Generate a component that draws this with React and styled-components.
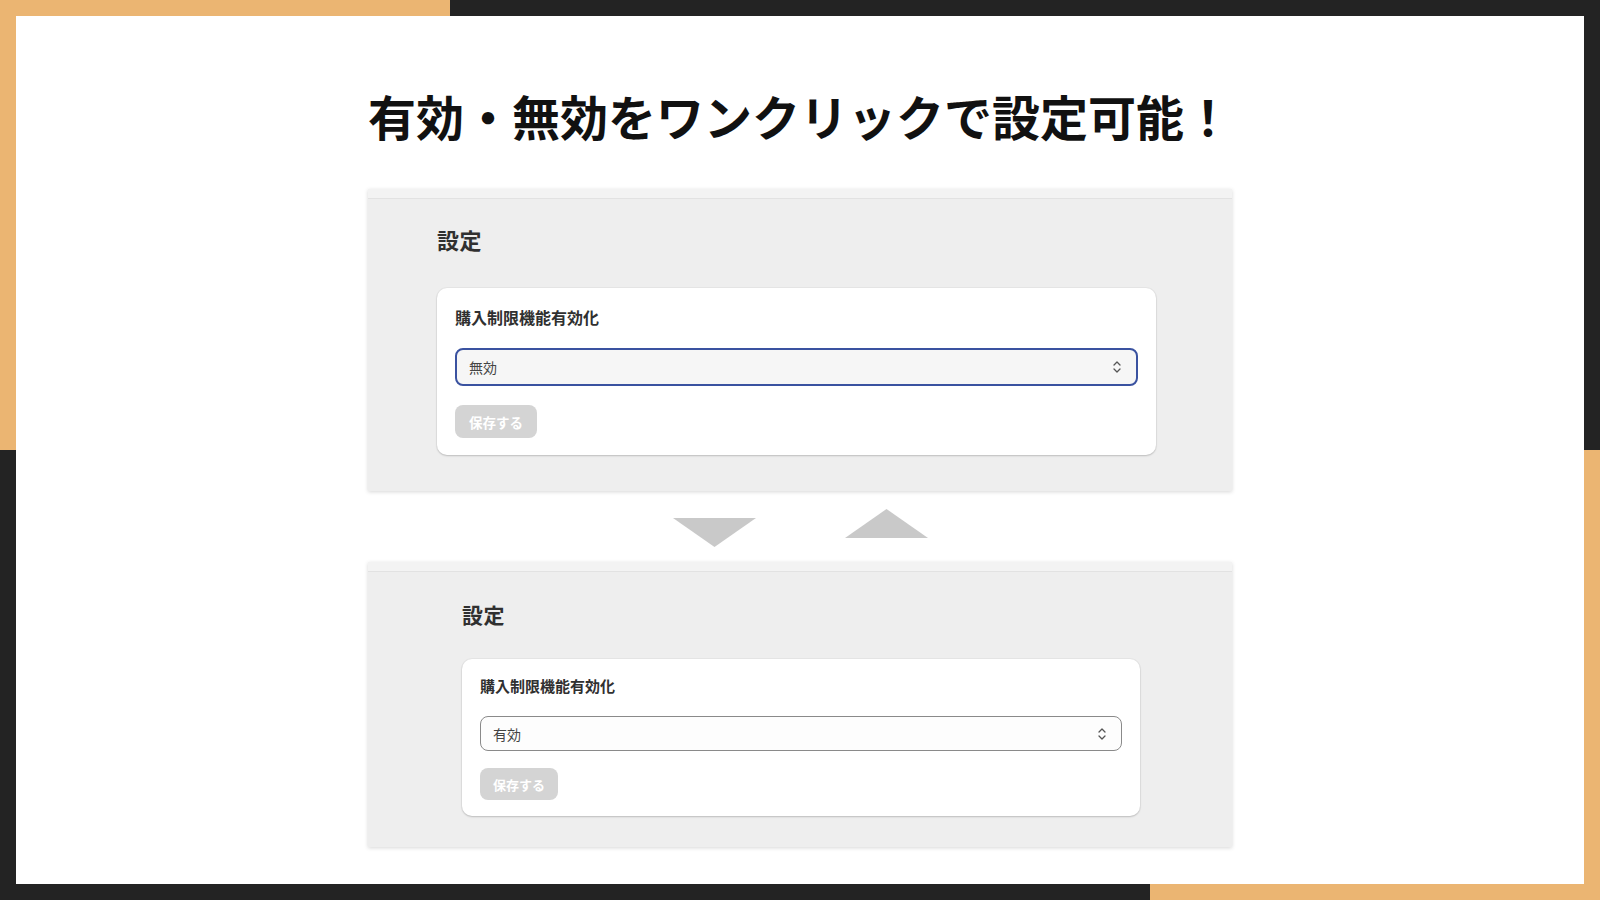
import React from "react";
import styled, { createGlobalStyle } from "styled-components";

const Global = createGlobalStyle`
  html, body { margin: 0; padding: 0; background: #fff; }
  body { font-family: "Noto Sans CJK JP", "Noto Sans", sans-serif; }
  * { box-sizing: border-box; }
`;

const ORANGE = "#ebb572";
const DARK = "#232323";

const Frame = styled.div`
  width: 1600px;
  height: 900px;
  padding: 16px;
  background:
    linear-gradient(to right, ${ORANGE} 450px, ${DARK} 450px) top / 100% 16px no-repeat,
    linear-gradient(to right, ${DARK} 1150px, ${ORANGE} 1150px) bottom / 100% 16px no-repeat,
    linear-gradient(to bottom, ${ORANGE} 450px, ${DARK} 450px) left / 16px 100% no-repeat,
    linear-gradient(to bottom, ${DARK} 450px, ${ORANGE} 450px) right / 16px 100% no-repeat;
`;

const Sheet = styled.main`
  width: 100%;
  height: 100%;
  background: #ffffff;
  display: flex;
  flex-direction: column;
  align-items: center;
  padding-top: 69px;
`;

const Title = styled.h1`
  margin: 0;
  font-family: "Noto Sans CJK JP", sans-serif;
  font-weight: 700;
  font-size: 48px;
  line-height: 60px;
  color: #111;
  letter-spacing: 0;
`;

const Panel = styled.section`
  width: 864px;
  margin-top: ${(p) => p.$mt || 0}px;
  background: #eeeeee;
  box-shadow: 0 1px 4px rgba(0, 0, 0, 0.16);
  display: flex;
  flex-direction: column;
`;

const PanelBand = styled.div`
  height: 10px;
  background: #f3f3f3;
  border-bottom: 1px solid #e2e2e2;
`;

const PanelBody = styled.div`
  display: flex;
  flex-direction: column;
  padding: ${(p) => p.$pt}px ${(p) => p.$pr}px ${(p) => p.$pb}px ${(p) => p.$pl}px;
`;

const Heading = styled.h2`
  margin: 0;
  font-size: ${(p) => p.$size}px;
  line-height: ${(p) => p.$lh}px;
  font-weight: 700;
  color: #303030;
  letter-spacing: 0.5px;
`;

const Card = styled.div`
  margin-top: ${(p) => p.$mt}px;
  background: #ffffff;
  border-radius: 10px;
  box-shadow: 0 1px 2px rgba(0, 0, 0, 0.18), 0 0 0 1px rgba(0, 0, 0, 0.03);
  display: flex;
  flex-direction: column;
  align-items: flex-start;
  padding: ${(p) => p.$pt}px 18px ${(p) => p.$pb}px 18px;
`;

const Label = styled.div`
  font-size: ${(p) => p.$size}px;
  line-height: 22px;
  font-weight: 700;
  color: #303030;
`;

const Select = styled.div`
  align-self: stretch;
  margin-top: ${(p) => p.$mt}px;
  height: ${(p) => p.$h}px;
  border-radius: 8px;
  border: ${(p) => (p.$focus ? "2px solid #3a52a0" : "1px solid #8a8a8a")};
  background: ${(p) => (p.$focus ? "#f6f6f6" : "#fdfdfd")};
  display: flex;
  align-items: center;
  justify-content: space-between;
  padding: 0 14px 0 12px;
  font-size: 14px;
  color: #444;
`;

const Chevron = styled.svg`
  width: 10px;
  height: 16px;
  flex: none;
`;

const SaveButton = styled.button`
  margin-top: ${(p) => p.$mt}px;
  height: ${(p) => p.$h}px;
  padding: 0 ${(p) => p.$px}px;
  border: none;
  border-radius: 8px;
  background: #d4d4d4;
  color: #ffffff;
  font-family: "Noto Sans CJK JP", sans-serif;
  font-weight: 700;
  font-size: ${(p) => p.$size}px;
  display: flex;
  align-items: center;
`;

const ArrowRow = styled.div`
  height: 71px;
  display: flex;
  align-items: flex-start;
  gap: 89px;
`;

const Triangle = styled.svg`
  width: 83px;
  height: 29px;
  margin-top: ${(p) => p.$mt}px;
`;

function UpDown() {
  return (
    <Chevron viewBox="0 0 10 16" fill="none" stroke="#555" strokeWidth="1.3" strokeLinecap="round" strokeLinejoin="round">
      <path d="M2 6 L5 3 L8 6" />
      <path d="M2 10 L5 13 L8 10" />
    </Chevron>
  );
}

function SettingsPanel({ cfg, value, focus }) {
  return (
    <Panel $mt={cfg.mt}>
      <PanelBand />
      <PanelBody $pt={cfg.pt} $pr={cfg.pr} $pb={cfg.pb} $pl={cfg.pl}>
        <Heading $size={cfg.hSize} $lh={cfg.hLh}>設定</Heading>
        <Card $mt={cfg.cardMt} $pt={cfg.cardPt} $pb={cfg.cardPb}>
          <Label $size={cfg.labelSize}>購入制限機能有効化</Label>
          <Select $focus={focus} $mt={cfg.selMt} $h={cfg.selH}>
            <span>{value}</span>
            <UpDown />
          </Select>
          <SaveButton $mt={cfg.btnMt} $h={cfg.btnH} $px={cfg.btnPx} $size={cfg.btnSize}>
            保存する
          </SaveButton>
        </Card>
      </PanelBody>
    </Panel>
  );
}

const top = {
  mt: 44, pt: 25, pr: 76, pb: 36, pl: 69,
  hSize: 22, hLh: 30, cardMt: 34, cardPt: 18, cardPb: 17,
  labelSize: 16, selMt: 20, selH: 38, btnMt: 19, btnH: 33, btnPx: 14, btnSize: 13.5,
};

const bottom = {
  mt: 0, pt: 28, pr: 92, pb: 31, pl: 94,
  hSize: 21, hLh: 28, cardMt: 31, cardPt: 16, cardPb: 16,
  labelSize: 15, selMt: 19, selH: 35, btnMt: 17, btnH: 32, btnPx: 13, btnSize: 13,
};

export default function App() {
  return (
    <>
      <Global />
      <Frame>
        <Sheet>
          <Title>有効・無効をワンクリックで設定可能！</Title>
          <SettingsPanel cfg={top} value="無効" focus />
          <ArrowRow>
            <Triangle $mt={27} viewBox="0 0 83 29">
              <polygon points="0,0 83,0 41.5,29" fill="#c9c9c9" />
            </Triangle>
            <Triangle $mt={18} viewBox="0 0 83 29">
              <polygon points="41.5,0 83,29 0,29" fill="#c9c9c9" />
            </Triangle>
          </ArrowRow>
          <SettingsPanel cfg={bottom} value="有効" />
        </Sheet>
      </Frame>
    </>
  );
}
